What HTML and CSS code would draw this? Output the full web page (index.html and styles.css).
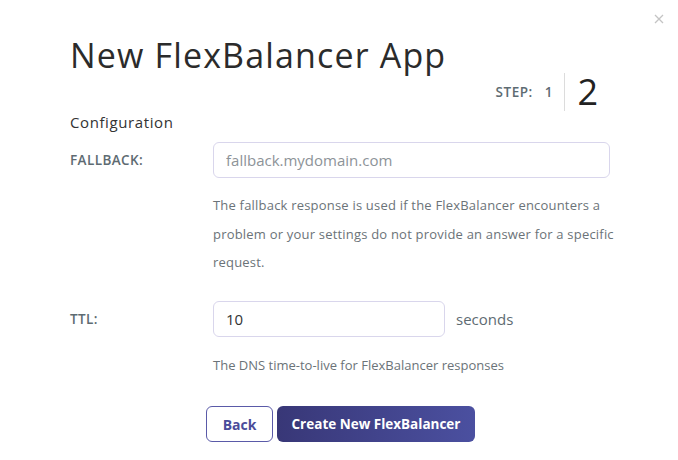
FILE: index.html
```html
<!DOCTYPE html>
<html>
<head>
<meta charset="utf-8">
<link rel="stylesheet" href="styles.css">
</head>
<body>
<div class="modal">
  <button class="close" aria-label="Close">
    <svg width="10" height="10" viewBox="0 0 10 10"><path d="M1 1L9 9M9 1L1 9" stroke="#c4c4c4" stroke-width="1.3"/></svg>
  </button>
  <h1 class="title">New FlexBalancer App</h1>
  <div class="steps">
    <span class="step-label">STEP:</span>
    <span class="step-num">1</span>
    <span class="step-divider"></span>
    <span class="step-current">2</span>
  </div>
  <h2 class="section">Configuration</h2>
  <div class="row">
    <label class="label">FALLBACK:</label>
    <input class="input input-wide" type="text" placeholder="fallback.mydomain.com">
  </div>
  <p class="help help-multi">The fallback response is used if the FlexBalancer encounters a problem or your settings do not provide an answer for a specific request.</p>
  <div class="row row-ttl">
    <label class="label">TTL:</label>
    <input class="input input-short" type="text" value="10">
    <span class="unit">seconds</span>
  </div>
  <p class="help help-single">The DNS time-to-live for FlexBalancer responses</p>
  <div class="actions">
    <button class="btn btn-back">Back</button>
    <button class="btn btn-primary">Create New FlexBalancer</button>
  </div>
</div>
</body>
</html>
```
FILE: styles.css
```css
* { box-sizing: border-box; }
html, body { margin: 0; padding: 0; background: #fff; }
body { font-family: "Open Sans", "Lato", sans-serif; color: #333; }
.modal { position: relative; width: 678px; height: 460px; padding: 0 0 0 70px; }
.close { position: absolute; top: 14px; right: 14px; width: 10px; height: 10px; padding: 0; border: 0; background: none; display: flex; }
.title { margin: 0; padding-top: 33px; font-family: "Open Sans", sans-serif; font-weight: 400; font-size: 34px; line-height: 44px; color: #2b2b2b; letter-spacing: 1.15px; }
.steps { display: flex; align-items: center; justify-content: flex-end; padding-right: 80px; margin-top: -4px; height: 38px; }
.step-label { font-size: 13.5px; font-weight: 600; color: #5e6b72; letter-spacing: 0.5px; }
.step-num { font-size: 13.5px; font-weight: 600; color: #5e6b72; margin-left: 12px; }
.step-divider { width: 1px; height: 38px; background: #dcdcdc; margin: 0 12px 0 12px; }
.step-current { font-size: 36px; font-weight: 400; color: #222; line-height: 38px; }
.section { margin: 0; font-size: 15px; font-weight: 400; color: #333; line-height: 20px; margin-top: 1px; letter-spacing: 0.6px; }
.row { display: flex; align-items: center; margin-top: 10px; }
.label { width: 143px; flex: none; font-size: 13.5px; font-weight: 600; color: #5e6b72; letter-spacing: 0.4px; }
.input { height: 36px; border: 1px solid #d9d6ec; border-radius: 6px; padding: 0 12px; font-family: inherit; font-size: 15px; color: #333; outline: none; background: #fff; }
.input::placeholder { color: #8d9398; }
.input-wide { width: 397px; }
.input-short { width: 232px; }
.unit { margin-left: 11px; font-size: 15px; color: #5e6b72; }
.help { margin: 0; padding-left: 143px; font-size: 13px; color: #6b7378; line-height: 28.5px; width: 560px; letter-spacing: 0.2px; }
.help-multi { margin-top: 13px; }
.row-ttl { margin-top: 24px; }
.help-single { margin-top: 14px; letter-spacing: 0; }
.actions { display: flex; gap: 4px; padding-left: 136px; margin-top: 27px; }
.btn { height: 36px; border-radius: 6px; font-family: inherit; font-size: 14px; font-weight: 700; padding: 0; cursor: pointer; }
.btn-back { width: 67px; border: 1px solid #5a5aa8; background: #fff; color: #4a4c9a; }
.btn-primary { width: 198px; border: 0; color: #fff; font-size: 13.5px; background: linear-gradient(90deg, #383777 0%, #4b50a0 100%); }
```
